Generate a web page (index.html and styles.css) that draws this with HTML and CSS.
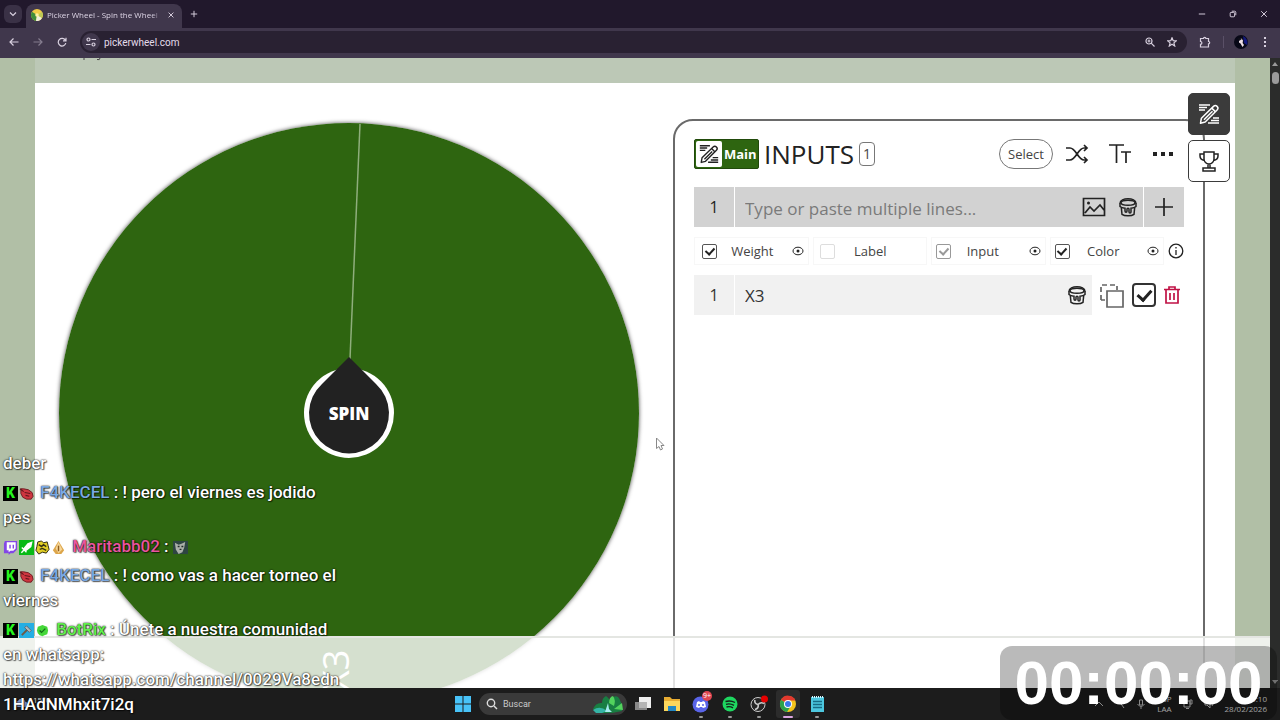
FILE: index.html
```html
<!DOCTYPE html>
<html lang="es">
<head>
<meta charset="utf-8">
<meta name="viewport" content="width=device-width, initial-scale=1">
<title>Picker Wheel</title>
<link rel="stylesheet" href="styles.css">
</head>
<body>
<svg class="sprites" aria-hidden="true">
  <symbol id="edit" viewBox="0 0 24 24"><g fill="none" stroke="currentColor" stroke-width="1.5"><path d="M2 3h11M2 5.500h8M2 8h6M16 16h6M14 18.500h8M11 21h11"/><path d="M3.500 21.200l.9-5L16.500 4.400a2.500 2.500 0 0 1 3.600 3.600L8.200 20z" stroke-linejoin="round"/><path d="M14.800 6.100l3.500 3.500M7 17.800L15.500 9.200"/></g></symbol>
  <symbol id="bucket" viewBox="0 0 20 20"><g fill="none" stroke="currentColor" stroke-width="1.500"><path d="M2 6.500C2 .2 18 .2 18 6.500"/><ellipse cx="10" cy="5.800" rx="7" ry="2.500"/><path d="M2 6v3.500c1.200 1.300 2.800 1.600 5 1.700V14c0 1.500 2 1.500 2 0v-2c0-1 2-1 2 0v3c0 1.400 2 1.400 2 0v-3.800c2.200-.1 3.800-.4 5-1.700V6"/><path d="M3.300 10.500L4 17.300c2.500 2 9.500 2 12 0l.7-6.800"/></g></symbol>
  <symbol id="eye" viewBox="0 0 12 12"><ellipse cx="6" cy="6" rx="5" ry="3.800" fill="none" stroke="currentColor" stroke-width="1"/><circle cx="6" cy="6" r="1.500" fill="currentColor"/></symbol>
  <symbol id="bug" viewBox="0 0 16 16"><path d="M2 3l3 0 5 1 4 3 1 4-2 3-5 0-4-2-2-4z" fill="#cf3640" stroke="#6d1a20"/><path d="M6 7l6 1M7 10l4 1M1 3l4 3" stroke="#62161b" stroke-width="1.200"/></symbol>
</svg>

<header class="tabs">
  <button class="tab-search" aria-label="Buscar pestañas"><svg viewBox="0 0 10 10"><path d="M2 3.500l3 3 3-3"/></svg></button>
  <div class="tab">
    <svg class="favicon" viewBox="0 0 12 12"><circle cx="6" cy="6" r="6" fill="#f1cc48"/><path d="M6 6L1 2.800A6 6 0 0 0 5 12z" fill="#3f8d3b"/><path d="M6 6l-1 6a6 6 0 0 0 6-3z" fill="#efefdc"/><path d="M6 6l5 3a6 6 0 0 0 0-6z" fill="#bcc956"/><circle cx="6" cy="6" r="1.800" fill="#fff1a3"/></svg>
    <span class="tab-title">Picker Wheel - Spin the Wheel</span>
    <button class="icon-btn" aria-label="Cerrar pestaña"><svg viewBox="0 0 10 10"><path d="M2 2l6 6M8 2L2 8"/></svg></button>
  </div>
  <button class="icon-btn" aria-label="Nueva pestaña"><svg viewBox="0 0 10 10"><path d="M5 1v8M1 5h8"/></svg></button>
  <div class="window-controls">
    <button class="icon-btn" aria-label="Minimizar"><svg viewBox="0 0 10 10"><path d="M1 5h8"/></svg></button>
    <button class="icon-btn" aria-label="Restaurar"><svg viewBox="0 0 10 10"><rect x="1.500" y="3" width="5.500" height="5.500" rx="1"/><path d="M3.500 1.500H7a1.500 1.500 0 0 1 1.500 1.500v3.500"/></svg></button>
    <button class="icon-btn" aria-label="Cerrar"><svg viewBox="0 0 10 10"><path d="M1.500 1.500l7 7M8.500 1.500l-7 7"/></svg></button>
  </div>
</header>

<nav class="toolbar">
  <button class="icon-btn" aria-label="Atrás"><svg viewBox="0 0 10 10"><path d="M9.500 5H1M4.500 1.500L1 5l3.500 3.500"/></svg></button>
  <button class="icon-btn dim" aria-label="Adelante"><svg viewBox="0 0 10 10"><path d="M.5 5H9M5.500 1.500L9 5 5.500 8.500"/></svg></button>
  <button class="icon-btn" aria-label="Recargar"><svg viewBox="0 0 10 10"><path d="M8.300 3.200A3.800 3.800 0 1 0 8.800 6M9 .8v3H6"/></svg></button>
  <div class="address">
    <button class="site-info" aria-label="Información del sitio"><svg viewBox="0 0 12 12"><circle cx="3.500" cy="3.500" r="1.500"/><path d="M6.500 3.500H11M1 8.500h4.500"/><circle cx="8.500" cy="8.500" r="1.500"/></svg></button>
    <input class="url" aria-label="Dirección" value="pickerwheel.com">
    <button class="icon-btn" aria-label="Zoom"><svg viewBox="0 0 10 10"><circle cx="4" cy="4" r="3"/><path d="M6.200 6.200L9.500 9.500M2.500 4h3M4 2.500v3"/></svg></button>
    <button class="icon-btn" aria-label="Favorito"><svg viewBox="0 0 10 10"><path d="M5 .8l1.200 2.900 3.100.2-2.400 2 .8 3.100L5 7.300 2.300 9l.8-3.100-2.400-2 3.100-.2z"/></svg></button>
  </div>
  <button class="icon-btn ext" aria-label="Extensiones"><svg viewBox="0 0 12 12"><path d="M1.500 2.500h3a1.200 1.200 0 0 1 2.400 0h2.600v3a1.200 1.200 0 0 1 0 2.400V11h-8V8.300a1.400 1.400 0 0 0 0-2.800z"/></svg></button>
  <span class="divider"></span>
  <button class="avatar" aria-label="Perfil"><svg viewBox="0 0 14 14"><circle cx="7" cy="7" r="7" fill="#080817"/><path d="M9 1a7 7 0 0 1 4 9l-3-2z" fill="#13187c"/><path d="M5 4.500l2.500-1 1.500 2-.4 2.500L10 10l-1.500 2-2-3.500L5 7.500z" fill="#eee0e6"/><path d="M4 3l4 1-3 2z" fill="#11101b"/></svg></button>
  <button class="icon-btn" aria-label="Menú"><svg viewBox="0 0 10 10"><path class="dots" d="M5 1v.1M5 5v.1M5 9v.1"/></svg></button>
</nav>

<div class="viewport">
  <div class="site">
    <div class="ad-strip"><svg viewBox="0 0 20 3"><path d="M1 0v2M14 1.500q3 1 3-1.500"/></svg></div>
    <main class="content">
      <section class="wheel">
        <svg viewBox="0 0 580 580" role="img" aria-label="Ruleta">
          <circle cx="290" cy="290" r="290" fill="#2e6510"/>
          <path d="M291 236L301 1" stroke="#8fae7c" stroke-width="1.500"/>
          <text class="slice-label" transform="translate(290 568) rotate(-90)">X3</text>
          <circle cx="290" cy="290" r="45" fill="#fff"/>
          <path d="M290 234L317 261A40 40 0 1 1 263 261z" fill="#222"/>
        </svg>
        <button class="spin">SPIN</button>
      </section>

      <section class="panel">
        <div class="panel-head">
          <span class="main-badge"><svg><use href="#edit"/></svg><b>Main</b></span>
          <h1>INPUTS</h1>
          <span class="count">1</span>
          <button class="select">Select</button>
          <button class="tool" aria-label="Mezclar"><svg viewBox="0 0 24 24"><path d="M1 6h4c6 0 8 12 14 12h3M1 18h4c6 0 8-12 14-12h3M19 3l3 3-3 3M19 15l3 3-3 3"/></svg></button>
          <button class="tool" aria-label="Texto"><svg viewBox="0 0 24 24"><path d="M1 3h15M8.500 3v18M13 10h10M18 10v11"/></svg></button>
          <button class="tool" aria-label="Más"><svg viewBox="0 0 24 24"><path class="solid" d="M2 10h4v4H2zM10 10h4v4h-4zM18 10h4v4h-4z"/></svg></button>
        </div>

        <div class="entry">
          <span class="num">1</span>
          <div class="entry-field">
            <input class="entry-text" aria-label="Entrada" placeholder="Type or paste multiple lines...">
            <button class="tool" aria-label="Imagen"><svg viewBox="0 0 24 24"><path d="M1.500 3.500h21v17h-21zM3 18l5-6 4 4 6-6 4 5"/><circle class="solid" cx="6.500" cy="8" r="1.500"/></svg></button>
            <button class="tool small" aria-label="Color"><svg><use href="#bucket"/></svg></button>
          </div>
          <button class="add" aria-label="Añadir"><svg viewBox="0 0 20 20"><path d="M10 1v18M1 10h18"/></svg></button>
        </div>

        <div class="options">
          <div class="option"><label><input type="checkbox" checked><span>Weight</span></label><svg class="eye"><use href="#eye"/></svg></div>
          <div class="option no-eye"><label class="off"><input type="checkbox"><span>Label</span></label></div>
          <div class="option"><label class="muted"><input type="checkbox" checked><span>Input</span></label><svg class="eye"><use href="#eye"/></svg></div>
          <div class="option"><label><input type="checkbox" checked><span>Color</span></label><svg class="eye"><use href="#eye"/></svg></div>
          <button class="info" aria-label="Información"><svg viewBox="0 0 16 16"><circle cx="8" cy="8" r="6.800"/><path d="M8 7v5M8 4v1.500"/></svg></button>
        </div>

        <div class="row">
          <span class="num">1</span>
          <div class="row-field"><input class="row-text" aria-label="Opción 1" value="X3"><button class="tool small" aria-label="Color"><svg><use href="#bucket"/></svg></button></div>
          <button class="tool copy" aria-label="Duplicar"><svg viewBox="0 0 26 26"><path stroke-dasharray="5 3" d="M2 17V2h16v5M2 17h4"/><path d="M8 8h16v16H8z"/></svg></button>
          <input class="row-check" type="checkbox" checked aria-label="Activar X3">
          <button class="tool trash" aria-label="Eliminar"><svg viewBox="0 0 18 20"><path d="M1 4.500h16M6 4.500V2h6v2.500M3 4.500V18h12V4.500M7 8v7M11 8v7"/></svg></button>
        </div>
      </section>

      <div class="side-tabs">
        <button class="active" aria-label="Entradas"><svg><use href="#edit"/></svg></button>
        <button aria-label="Resultados"><svg viewBox="0 0 24 24"><path d="M7 3h10v7a5 5 0 0 1-10 0zM7 5H3v2c0 3 2 4 4.500 4.500M17 5h4v2c0 3-2 4-4.500 4.500M11 15v4M13 15v4M6 19h12v3H6z"/></svg></button>
      </div>
    </main>
    <div class="banner"></div>
  </div>
  <div class="scrollbar"><span class="up"></span><span class="thumb"></span><span class="down"></span></div>
</div>

<footer class="taskbar">
  <div class="weather"><svg viewBox="0 0 14 12"><path d="M4 11a3 3 0 0 1 0-6 4 4 0 0 1 7.500 1A2.500 2.500 0 0 1 11 11z" fill="#8298cf"/></svg><span>15°C</span></div>
  <div class="apps">
    <button aria-label="Inicio"><svg viewBox="0 0 18 18"><path d="M1 1h7.500v7.500H1zM9.500 1H17v7.500H9.500zM1 9.500h7.500V17H1zM9.500 9.500H17V17H9.500z" fill="#48c3f8"/></svg></button>
    <label class="search"><svg class="lens" viewBox="0 0 12 12"><circle cx="5" cy="5" r="3.700"/><path d="M8 8l3 3"/></svg><input placeholder="Buscar"><svg class="art" viewBox="0 0 32 18"><path d="M1 14q3-7 9-6 0-5 4-7 4 3 4 6 4-8 8-5 4 4 4 14l-10 2H5z" fill="#187e42"/><path d="M1 15q7-5 14 1l-5 2H4z" fill="#35b5a7"/><path d="M17 8q0-6 4-7 3 4 1 10zM22 14l8-6 1 7z" fill="#52d35d"/><path d="M16 8l-3 9h7l-3-3z" fill="#a6ecef"/></svg></label>
    <button aria-label="Vista de tareas"><svg viewBox="0 0 18 18"><path d="M5 2h12v11H5z" fill="#eee"/><path d="M1 7h12v8H1z" fill="#888"/><path d="M5 7h8v6H5z" fill="#b5b5b5"/></svg></button>
    <button aria-label="Explorador"><svg viewBox="0 0 18 18"><path d="M1 2h6l2 2h8v12H1z" fill="#e7ac32"/><path d="M1 6h16v10H1z" fill="#fbd65c"/><path d="M5 11h8v5H5z" fill="#2187c4"/></svg></button>
    <button class="running" aria-label="Discord"><svg viewBox="0 0 18 18"><circle cx="8.500" cy="9.500" r="8" fill="#5964e8"/><path d="M4 12l1-5 2-1 1 1h2l1-1 2 1 1 5-3 1-1-1H8l-1 1z" fill="#fff"/><circle cx="7" cy="10" r="1" fill="#5964e8"/><circle cx="11" cy="10" r="1" fill="#5964e8"/></svg><span class="notice">9+</span></button>
    <button class="running" aria-label="Spotify"><svg viewBox="0 0 18 18"><circle cx="9" cy="9" r="7.500" fill="#1ed760"/><path d="M4.500 6.500q5-1.500 9.500 1M5 9.300q4-1.200 8 1M5.500 12q3.500-1 6.500.8" fill="none" stroke="#142019" stroke-width="1.400"/></svg></button>
    <button class="running" aria-label="OBS"><svg viewBox="0 0 18 18"><circle cx="8" cy="9.500" r="7" fill="#252525" stroke="#ccc"/><path d="M8 9.500q-4-1-3-4.500M8 9.500q3-3 6-1M8 9.500q1 4-3 5" fill="none" stroke="#ccc" stroke-width="1.600"/><circle cx="14.500" cy="4" r="3.500" fill="#e60000"/></svg></button>
    <button class="running current" aria-label="Chrome"><svg viewBox="0 0 18 18"><circle cx="9" cy="9" r="8" fill="#f5c51d"/><path d="M9 9L2 5A8 8 0 0 1 16.500 5.500H9z" fill="#e2392e"/><path d="M9 9L2 5a8 8 0 0 0 6 12l4.500-7z" fill="#2ba24c"/><circle cx="9" cy="9" r="4" fill="#fff"/><circle cx="9" cy="9" r="3" fill="#3978e8"/></svg></button>
    <button class="running" aria-label="Bloc de notas"><svg viewBox="0 0 18 18"><path d="M3 2h13v15H3z" fill="#4dc7df"/><path d="M5 6.500h9M5 9.500h9M5 12.500h9" stroke="#176c85" stroke-width="1.400"/><path d="M4 2h11" stroke="#d9f6ff" stroke-width="2" stroke-dasharray="1 1"/></svg></button>
  </div>
  <div class="tray">
    <svg viewBox="0 0 10 10"><path d="M1 7l4-4 4 4"/></svg>
    <svg viewBox="0 0 10 10"><path d="M1 5l3-3 5 7"/></svg>
    <svg viewBox="0 0 10 10"><path d="M3.500 1h3v5h-3zM1.500 5q3.500 5 7 0M5 8v2"/></svg>
    <span>ESP<br>LAA</span>
    <svg viewBox="0 0 10 10"><path d="M1 2h6v6H1zM7 1h2v4H7zM3 9.500h3"/></svg>
    <svg viewBox="0 0 10 10"><path d="M1 4h2l3-3v8L3 6H1zM8 3q2 2 0 4"/></svg>
    <span>19:10<br>28/02/2026</span>
  </div>
</footer>

<svg class="cursor" viewBox="0 0 10 14"><path d="M1.500 1v10.500l2.500-2 1.500 3.500 2-1L6 8.500h3z" fill="#fff" stroke="#888"/></svg>

<section class="chat">
  <p>deber</p>
  <p><i class="k">K</i><svg><use href="#bug"/></svg> <b class="blue">F4KECEL</b> : ! pero el viernes es jodido pes</p>
  <p><svg viewBox="0 0 16 16"><path d="M2 1h13v9l-4 4H8l-2 2v-2H1V4z" fill="#8347e6"/><path d="M4 2.500h9.500V9L11 11.500H8L6 13v-2H4z" fill="#fff"/><path d="M7.500 5v4M11 5v4" stroke="#8347e6" stroke-width="1.500"/></svg><svg viewBox="0 0 16 16"><path d="M0 0h16v16H0z" fill="#08ba16"/><path d="M13.500 2.500l-1 4.500-5 4-2-2 4-5zM3 8l5 5M5.500 10.500l-3 3" fill="#fff" stroke="#fff" stroke-width="1.500"/></svg><svg viewBox="0 0 16 16"><path d="M3 2l4-1 2 2 4-1 1 4 1 4-3 4-4-1-4 2-3-4 1-4z" fill="#e1ce25" stroke="#26240e"/><path d="M4 5l3 2 2-2 3 2M5 10l3-1 4 2" fill="none" stroke="#343012" stroke-width="1.500"/></svg><svg viewBox="0 0 16 16"><path d="M8 1l6 10-3 4H5l-3-4z" fill="#dda64b"/><path d="M8 2L5 9l3 5 4-4z" fill="#f7d698"/><path d="M8 6v6" stroke="#8d5c1d" stroke-width="1.500"/></svg> <b class="pink">Maritabb02</b> : <svg viewBox="0 0 16 16"><path d="M0 1h16v14H0z" fill="#2e4542"/><path d="M2 3l4 2 3-1 4-2-1 6-2 5-4 2-3-5z" fill="#abb1aa"/><path d="M5 7h2M9 7h2M7 10h2" stroke="#202b2a" stroke-width="1.500"/></svg></p>
  <p><i class="k">K</i><svg><use href="#bug"/></svg> <b class="blue">F4KECEL</b> : ! como vas a hacer torneo el viernes</p>
  <p><i class="k">K</i><svg viewBox="0 0 16 16"><path d="M0 0h16v16H0z" fill="#25aee3"/><path d="M8 3l5 5-2 2-5-5z" fill="#b3b9bd" stroke="#526773"/><path d="M8.500 7.500L3 13" stroke="#6e5945" stroke-width="2"/></svg><svg viewBox="0 0 16 16"><path d="M8 2l2 1 3 1 1 4-1 4-3 1-2 1-3-1-2-2-1-3 1-4 3-1z" fill="#45d739"/><path d="M5 8l2 2 4-4" fill="none" stroke="#126c17" stroke-width="1.500"/></svg> <b class="lime">BotRix</b> : Únete a nuestra comunidad en whatsapp: https://whatsapp.com/channel/0029Va8edn1HAdNMhxit7i2q</p>
</section>

<div class="timer">00:00:00</div>
</body>
</html>
```

FILE: styles.css
```css
* { box-sizing: border-box; }
body {
  margin: 0;
  height: 100vh;
  display: flex;
  flex-direction: column;
  position: relative;
  overflow: hidden;
  font-family: "Open Sans", "Noto Sans", sans-serif;
  color: #222;
}
button { border: 0; padding: 0; background: none; color: inherit; font: inherit; display: grid; place-items: center; }
input { font: inherit; color: inherit; border: 0; padding: 0; margin: 0; background: none; min-width: 0; outline: 0; }
svg { display: block; }
.sprites { position: absolute; width: 0; height: 0; }

/* Browser chrome */
.tabs { height: 28px; flex: none; display: flex; align-items: center; background: #21182c; color: #ddd5e5; padding-left: 4px; }
.tab-search { width: 18px; height: 18px; border-radius: 6px; background: #3a3146; margin-right: 4px; }
.tab-search svg { width: 10px; height: 10px; }
.tab-search path, .icon-btn svg, .site-info svg { fill: none; stroke: #d8d0df; stroke-width: 1.2; }
.tab { width: 156px; height: 24px; align-self: flex-end; border-radius: 8px 8px 0 0; background: #40374c; display: flex; align-items: center; padding: 0 5px 2px; gap: 4px; }
.favicon { width: 12px; height: 12px; flex: none; }
.tab-title { flex: 1; font: 500 8px/16px "Open Sans", sans-serif; white-space: nowrap; overflow: hidden; mask-image: linear-gradient(90deg, #000 92%, transparent); }
.icon-btn { width: 24px; height: 24px; flex: none; }
.icon-btn svg { width: 10px; height: 10px; }
.tab .icon-btn { width: 12px; }
.tab .icon-btn svg, .window-controls svg { width: 8px; height: 8px; }
.tabs > .icon-btn svg { width: 8px; height: 8px; }
.window-controls { margin-left: auto; display: flex; gap: 7px; padding-right: 4px; }
.toolbar { height: 30px; flex: none; display: flex; align-items: center; background: #40374c; padding: 0 3px 2px 2px; }
.dim { opacity: .45; }
.address { flex: 1; height: 22px; border-radius: 11px; background: #292132; display: flex; align-items: center; padding: 0 4px 0 2px; margin: 0 6px 0 6px; }
.site-info { width: 18px; height: 18px; border-radius: 50%; background: #40374c; }
.site-info svg { width: 12px; height: 12px; }
.url { flex: 1; font-family: Roboto, sans-serif; font-size: 10px; font-weight: 400; color: #e4dcea; margin-left: 4px; }
.address .icon-btn { width: 22px; }
.ext svg { width: 12px; height: 12px; }
.divider { width: 1px; height: 12px; background: #5a5067; margin: 0 10px 0 6px; }
.avatar svg { width: 14px; height: 14px; }
.avatar { margin-right: 5px; }
.dots { stroke-width: 2; stroke-linecap: square; }

/* Page */
.viewport { flex: 1; min-height: 0; display: flex; }
.site { flex: 1; position: relative; overflow: hidden; background: #b1bfa6; padding: 0 35px; }
.ad-strip { height: 25px; background: #bcc8b6; padding-left: 48px; }
.ad-strip svg { width: 20px; height: 3px; fill: none; stroke: #444; }
.content { position: relative; background: #fff; display: grid; grid-template-columns: 580fr 532fr; gap: 34px; padding: 36px 30px 0 24px; }
.wheel { position: relative; align-self: start; margin-top: 4px; border-radius: 50%; box-shadow: 0 0 4px rgba(0, 0, 0, .7); }
.wheel svg { width: 100%; }
.slice-label { fill: #fff; font-size: 36px; }
.spin { position: absolute; inset: 0; margin: auto; width: 80px; height: 80px; border-radius: 50%; color: #fff; font-size: 17px; font-weight: 800; }
.panel { min-height: 640px; border: 2px solid #6a6a6a; border-radius: 20px; padding: 17px 19px; }
.panel-head { display: flex; align-items: center; height: 32px; color: #222; }
.main-badge { display: flex; align-items: center; width: 65px; height: 30px; background: #2e6510; border: 1px solid #214a0b; border-radius: 2px; padding: 1px; color: #fff; font-size: 13px; gap: 2px; }
.main-badge svg { width: 26px; height: 26px; flex: none; background: #fff; color: #222; padding: 2px; border-radius: 2px; }
h1 { font-size: 26px; font-weight: 500; line-height: 32px; margin: 0 5px; }
.count { font-size: 14px; width: 16px; height: 24px; line-height: 22px; text-align: center; border: 1px solid #777; border-radius: 4px; color: #444; }
.select { margin-left: auto; margin-right: 12px; width: 54px; height: 30px; border: 1px solid #777; border-radius: 15px; font-size: 13px; color: #444; }
.tool { width: 24px; height: 24px; flex: none; }
.tool svg { width: 24px; height: 24px; fill: none; stroke: #222; stroke-width: 1.7; }
.tool.small svg { width: 20px; height: 20px; color: #222; }
.panel-head .tool + .tool { margin-left: 19px; }
.panel-head .tool:last-child { margin-right: 9px; }
.tool .solid { fill: #222; stroke: none; }
.entry { display: flex; gap: 1px; height: 40px; margin-top: 17px; }
.num { width: 40px; display: grid; place-items: center; font-size: 16px; }
.entry > * { background: #d2d2d2; }
.entry-field { flex: 1; display: flex; align-items: center; padding: 0 3px 0 10px; gap: 10px; }
.entry-text { flex: 1; height: 30px; padding-top: 2px; font-size: 17px; font-weight: 500; }
.entry-text::placeholder { color: #7a7a7a; opacity: 1; }
.add { width: 40px; }
.add svg { width: 20px; height: 20px; stroke: #222; stroke-width: 1.7; }
.options { display: grid; grid-template-columns: repeat(4, 1fr) 16px; gap: 4px; margin-top: 10px; height: 28px; }
.option { display: flex; align-items: center; border: 1px solid #f7f7f7; padding: 0 4px 0 7px; color: #444; }
.option:nth-child(n+3) { padding-left: 4px; }
.option label { flex: 1; display: flex; align-items: center; font-size: 13px; }
.option span { flex: 1; text-align: center; margin-right: 4px; }
.no-eye { padding: 0 16px 0 6px; }
.eye { width: 12px; height: 12px; color: #222; }
.option input, .row-check { appearance: none; width: 15px; height: 15px; border: 1px solid #555; border-radius: 2px; display: grid; place-items: center; }
.option input:checked::after, .row-check:checked::after { content: ""; width: 4px; height: 7px; border: solid #222; border-width: 0 2px 2px 0; transform: rotate(42deg); margin-bottom: 2px; }
.option .off input { border-color: #ddd; }
.option .muted input { border-color: #999; }
.option .muted input:checked::after { border-color: #999; }
.option .muted span { margin-right: 14px; }
.option:nth-child(4) span { margin-right: 10px; }
.info svg { width: 16px; height: 16px; fill: none; stroke: #222; stroke-width: 1.3; }
.row { display: flex; align-items: center; height: 40px; margin-top: 10px; gap: 1px; color: #333; }
.row .num, .row-field { height: 100%; background: #f1f1f1; }
.row-field { flex: 1; display: flex; align-items: center; padding: 0 3px 0 10px; }
.row-text { flex: 1; font-size: 17px; }
.row .copy { width: 26px; margin: 0 6px; }
.copy svg { width: 26px; height: 26px; stroke: #666; }
.row-check { width: 24px; height: 24px; border: 2px solid #333; border-radius: 4px; }
.row-check:checked::after { width: 6px; height: 11px; border-width: 0 3px 3px 0; }
.row .trash { width: 18px; margin: 0 3px 0 6px; }
.trash svg { width: 18px; height: 20px; stroke: #c01245; }
.side-tabs { position: absolute; top: 10px; right: 5px; display: grid; gap: 5px; }
.side-tabs button { width: 42px; height: 42px; border: 1px solid #3b3b3b; border-radius: 5px; background: #fff; }
.side-tabs .active { background: #3b3b3b; color: #fff; }
.side-tabs svg { width: 24px; height: 24px; fill: none; stroke: currentColor; stroke-width: 1.5; }
.banner { position: absolute; left: 0; right: 0; bottom: 0; height: 52px; background: rgba(255, 255, 255, .8); border-top: 2px solid #e4e6e2; }
.scrollbar { width: 10px; background: #2b2c2b; display: flex; flex-direction: column; align-items: center; gap: 6px; padding: 4px 1px; }
.up, .down { border: 3px solid transparent; }
.up { border-bottom: 4px solid #999; border-top: 0; }
.down { border-top: 4px solid #999; border-bottom: 0; margin-top: auto; }
.thumb { width: 7px; height: 12px; border-radius: 4px; background: #9b9b9b; }

/* Taskbar */
.taskbar { height: 32px; flex: none; background: #1c1c1c; display: grid; grid-template-columns: 1fr auto 1fr; align-items: center; color: #ddd; }
.weather { display: flex; align-self: start; gap: 5px; padding: 6px 0 0 14px; font-size: 8px; }
.weather svg { width: 14px; height: 16px; }
.apps { display: flex; align-items: center; gap: 5px; }
.apps button { width: 24px; height: 28px; position: relative; }
.apps button svg { width: 18px; height: 18px; }
.search { width: 148px; height: 22px; border-radius: 11px; background: #3a3a3a; display: flex; align-items: center; padding: 0 3px 0 7px; gap: 5px; margin: 0 -1px; }
.search input { flex: 1; font-family: Roboto, sans-serif; font-size: 9px; }
.search input::placeholder { color: #ccc; opacity: 1; }
.lens { width: 12px; height: 12px; fill: none; stroke: #ddd; stroke-width: 1.4; }
.art { width: 32px; height: 18px; }
.running::after { content: ""; position: absolute; bottom: 0; width: 4px; height: 2px; border-radius: 1px; background: #999; }
.current { background: #2c2c2c; border-radius: 3px; }
.current::after { width: 10px; background: #dba5e0; }
.notice { position: absolute; top: 1px; right: 1px; width: 10px; height: 10px; border-radius: 50%; background: #e14652; color: #fff; font-size: 7px; line-height: 10px; }
.tray { display: flex; align-items: center; justify-content: flex-end; gap: 11px; padding-right: 13px; font-size: 8px; line-height: 10px; text-align: right; }
.tray svg { width: 10px; height: 10px; fill: none; stroke: #bbb; }

/* Stream overlays */
.cursor { position: absolute; left: 655px; top: 437px; width: 10px; height: 14px; }
.chat { position: absolute; left: 3px; bottom: 3px; width: 340px; display: grid; gap: 4px; font: 500 17px/25px Roboto, sans-serif; color: #fff; text-shadow: 0 0 2px rgba(0, 0, 0, .9), 0 0 1px rgba(0, 0, 0, .6), 1px 1px 1px rgba(0, 0, 0, .5); }
.chat p { margin: 0; overflow-wrap: anywhere; }
.chat b { font-weight: 500; margin-left: 1px; }
.chat svg, .k { display: inline-block; width: 15px; height: 15px; margin-right: 1px; vertical-align: -3px; }
.k { background: #000; color: #25f41e; font: 900 14px/15px Roboto, sans-serif; text-align: center; text-shadow: none; overflow: hidden; vertical-align: -3px; }
.blue { color: #7ba9e2; }
.pink { color: #e9559f; }
.lime { color: #60f04c; }
.timer { position: absolute; right: 3px; bottom: 0; width: 277px; height: 74px; border-radius: 12px; background: rgba(0, 0, 0, .27); color: #fff; font: bold 62px/74px "Liberation Sans", Arial, sans-serif; text-align: center; }
```
